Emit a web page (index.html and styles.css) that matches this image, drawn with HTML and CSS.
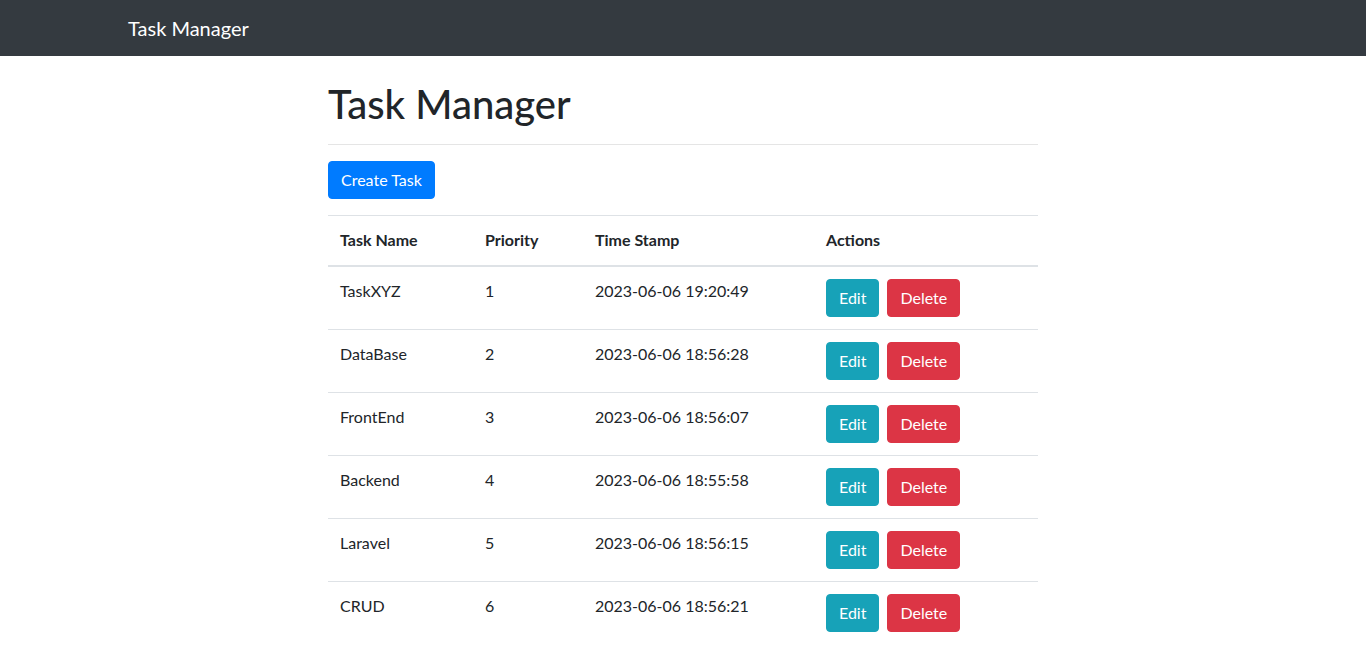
FILE: index.html
```html
<!DOCTYPE html>
<html lang="en">
<head>
<meta charset="utf-8">
<title>Task Manager</title>
<link rel="stylesheet" href="styles.css">
</head>
<body>
<nav class="navbar">
  <div class="nav-container">
    <a class="brand" href="#">Task Manager</a>
  </div>
</nav>
<main class="content">
  <h1 class="title">Task Manager</h1>
  <hr class="divider">
  <div class="toolbar">
    <a class="btn btn-primary" href="#">Create Task</a>
  </div>
  <table class="table">
    <thead>
      <tr>
        <th class="c-name">Task Name</th>
        <th class="c-prio">Priority</th>
        <th class="c-time">Time Stamp</th>
        <th class="c-act">Actions</th>
      </tr>
    </thead>
    <tbody>
      <tr><td>TaskXYZ</td><td>1</td><td>2023-06-06 19:20:49</td><td><a class="btn btn-info" href="#">Edit</a><a class="btn btn-danger" href="#">Delete</a></td></tr>
      <tr><td>DataBase</td><td>2</td><td>2023-06-06 18:56:28</td><td><a class="btn btn-info" href="#">Edit</a><a class="btn btn-danger" href="#">Delete</a></td></tr>
      <tr><td>FrontEnd</td><td>3</td><td>2023-06-06 18:56:07</td><td><a class="btn btn-info" href="#">Edit</a><a class="btn btn-danger" href="#">Delete</a></td></tr>
      <tr><td>Backend</td><td>4</td><td>2023-06-06 18:55:58</td><td><a class="btn btn-info" href="#">Edit</a><a class="btn btn-danger" href="#">Delete</a></td></tr>
      <tr><td>Laravel</td><td>5</td><td>2023-06-06 18:56:15</td><td><a class="btn btn-info" href="#">Edit</a><a class="btn btn-danger" href="#">Delete</a></td></tr>
      <tr><td>CRUD</td><td>6</td><td>2023-06-06 18:56:21</td><td><a class="btn btn-info" href="#">Edit</a><a class="btn btn-danger" href="#">Delete</a></td></tr>
    </tbody>
  </table>
</main>
</body>
</html>
```

FILE: styles.css
```css
* { box-sizing: border-box; }
html, body { margin: 0; padding: 0; }
body {
  font-family: "Lato", "Noto Sans", "Liberation Sans", sans-serif;
  font-size: 16px;
  line-height: 1.5;
  color: #212529;
  background: #fff;
}
.navbar {
  background: #343a40;
  height: 56px;
  padding: 8px 0;
}
.nav-container {
  width: 1140px;
  margin: 0 auto;
  padding: 0 15px;
}
.brand {
  display: inline-block;
  padding: 5px 0;
  font-size: 20px;
  line-height: 30px;
  color: #fff;
  text-decoration: none;
}
.content {
  width: 710px;
  margin: 24px auto 0;
}
.title {
  margin: 0 0 8px;
  font-size: 40px;
  font-weight: 500;
  line-height: 1.2;
}
.divider {
  margin: 16px 0;
  border: 0;
  border-top: 1px solid rgba(0,0,0,.1);
}
.toolbar { margin-bottom: 16px; }
.btn {
  display: inline-block;
  padding: 6px 12px;
  font-size: 16px;
  line-height: 24px;
  border: 1px solid transparent;
  border-radius: 4px;
  color: #fff;
  text-decoration: none;
  vertical-align: middle;
}
.btn-primary { background: #007bff; border-color: #007bff; }
.btn-info { background: #17a2b8; border-color: #17a2b8; margin-right: 8px; }
.btn-danger { background: #dc3545; border-color: #dc3545; }
.table {
  width: 100%;
  border-collapse: collapse;
  table-layout: fixed;
}
.table th, .table td {
  padding: 12px;
  text-align: left;
  vertical-align: top;
  border-top: 1px solid #dee2e6;
}
.table th {
  padding-bottom: 13px;
  font-weight: 700;
  vertical-align: bottom;
  border-bottom: 2px solid #dee2e6;
}
.c-name { width: 145px; }
.c-prio { width: 110px; }
.c-time { width: 231px; }
.c-act { width: 224px; }
```
